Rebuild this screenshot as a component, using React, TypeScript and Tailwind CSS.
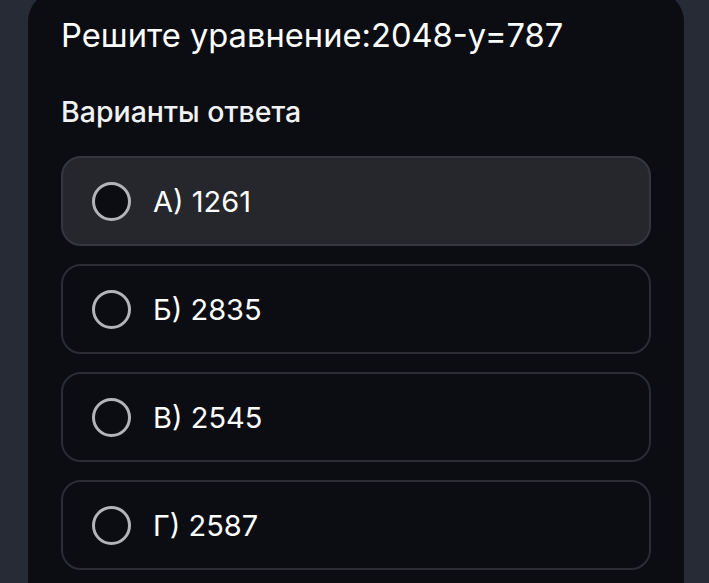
import React, { useState } from 'react';

const options = [
  { id: 'a', label: 'А) 1261' },
  { id: 'b', label: 'Б) 2835' },
  { id: 'c', label: 'В) 2545' },
  { id: 'd', label: 'Г) 2587' },
];

export default function App() {
  const [hovered] = useState('a');

  return (
    <div
      className="w-[709px] h-[583px] overflow-hidden bg-[#262b36] pl-[28px] pr-[25px]"
      style={{ fontFamily: 'Inter, "Noto Sans", sans-serif' }}
    >
      <div className="-mt-[10px] min-h-[700px] rounded-[32px] bg-[#0b0d12] px-[33px] pt-[25px]">
        <h1 className="text-[32.7px] leading-[40px] font-normal text-white">Решите уравнение:2048-y=787</h1>

        <h2 className="mt-[40px] text-[28.5px] leading-[34px] font-medium text-[#f1f2f4]">Варианты ответа</h2>

        <div className="mt-[27px] flex flex-col gap-[18px]">
          {options.map(opt => (
            <button
              key={opt.id}
              className={
                'flex h-[90px] w-full items-center rounded-[20px] border-2 px-[29px] text-left ' +
                (opt.id === hovered ? 'border-[#34373e] bg-[#25272c]' : 'border-[#2a2d34] bg-[#0b0d12]')
              }
            >
              <span className="h-[39px] w-[39px] shrink-0 rounded-full border-[3px] border-[#b3b4b8] bg-[#0b0d12]" />
              <span className="ml-[22px] text-[29px] leading-none text-white">{opt.label}</span>
            </button>
          ))}
        </div>
      </div>
    </div>
  );
}
